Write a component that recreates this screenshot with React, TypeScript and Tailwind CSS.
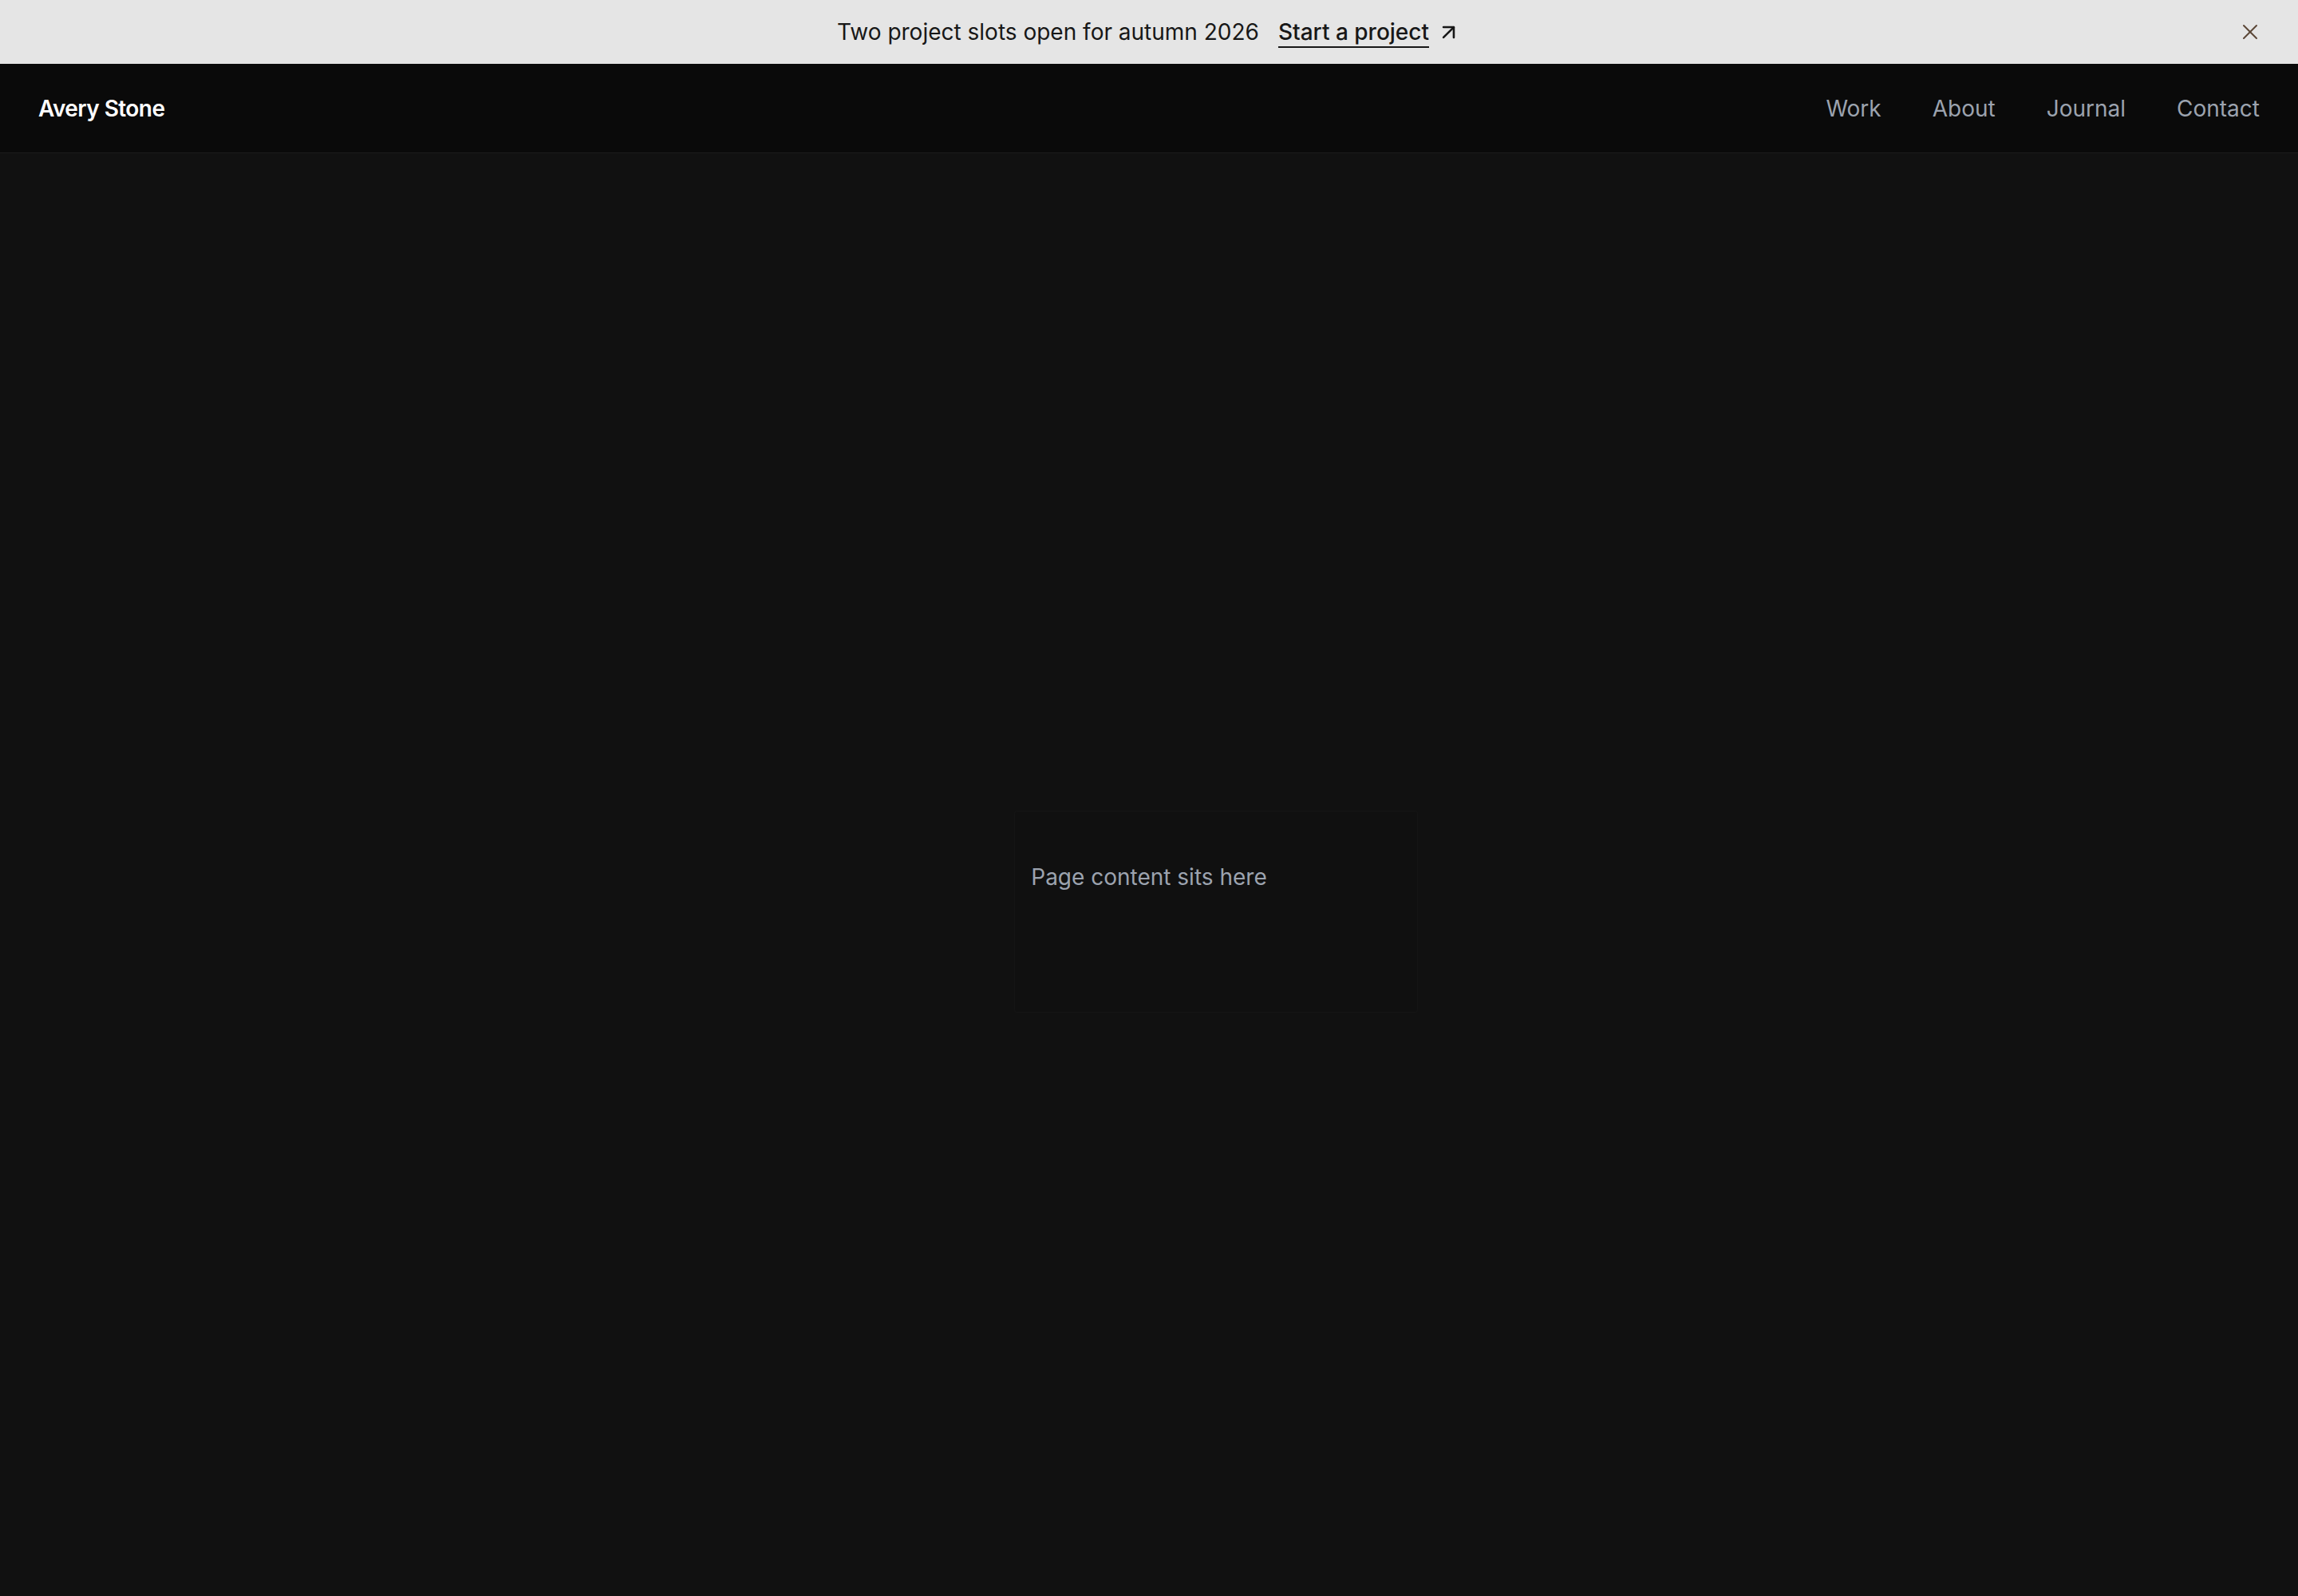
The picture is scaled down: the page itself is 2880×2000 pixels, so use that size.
import { ArrowUpRight, X } from "lucide-react";

const links = ["Work", "About", "Journal", "Contact"];

function Banner() {
  return (
    <div className="relative flex h-[80px] items-center justify-center bg-[#e5e5e5] text-[28px] text-[#171717]">
      <span>Two project slots open for autumn 2026</span>
      <a href="#" className="ml-[24px] flex items-center gap-[9px] font-medium">
        <span className="underline decoration-2 underline-offset-[8px]">Start a project</span>
        <ArrowUpRight size={31} strokeWidth={2} />
      </a>
      <button
        aria-label="Dismiss"
        className="absolute right-[44px] top-1/2 -translate-y-1/2 text-[#5b4636]"
      >
        <X size={32} strokeWidth={1.5} />
      </button>
    </div>
  );
}

function Header() {
  return (
    <header className="flex h-[112px] items-center justify-between border-b border-[#1c1c1c] bg-[#0a0a0a] px-[48px]">
      <a href="#" className="text-[28px] font-semibold tracking-[-0.02em] text-white">
        Avery Stone
      </a>
      <nav className="flex items-center gap-[64px] text-[28px] text-[#9ca3af]">
        {links.map((l) => (
          <a key={l} href="#">
            {l}
          </a>
        ))}
      </nav>
    </header>
  );
}

export default function App() {
  return (
    <div
      className="flex min-h-screen flex-col bg-[#111111]"
      style={{ fontFamily: "Inter, 'Noto Sans', sans-serif" }}
    >
      <Banner />
      <Header />
      <main className="flex flex-1 items-center justify-center pt-[6px]">
        <div className="relative">
          {/* faint panel behind the placeholder */}
          <div className="absolute left-[-21px] top-[-62px] h-[253px] w-[506px] rounded-[4px] border border-white/[0.025] bg-[#101010]" />
          <p className="relative text-[28px] text-[#9ca3af]">Page content sits here</p>
        </div>
      </main>
    </div>
  );
}
